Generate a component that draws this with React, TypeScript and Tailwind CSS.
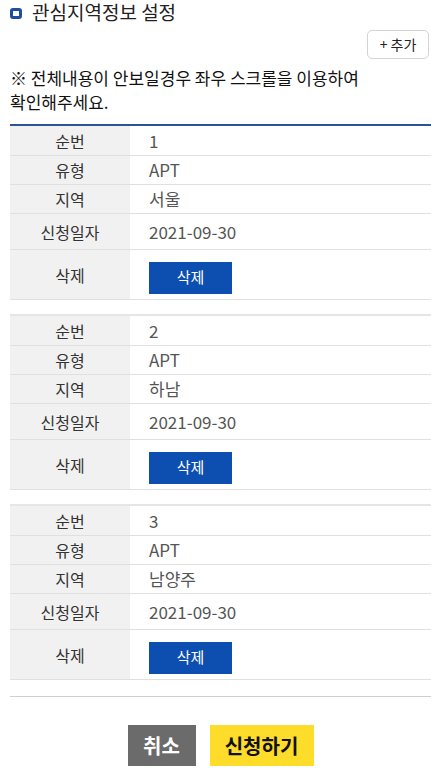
import React from "react";

interface AreaItem {
  no: number;
  type: string;
  region: string;
  date: string;
}

const items: AreaItem[] = [
  { no: 1, type: "APT", region: "서울", date: "2021-09-30" },
  { no: 2, type: "APT", region: "하남", date: "2021-09-30" },
  { no: 3, type: "APT", region: "남양주", date: "2021-09-30" },
];

function Row({ label, h, children }: { label: string; h: string; children: React.ReactNode }) {
  return (
    <div className={`flex border-b border-[#e0e0e0] ${h}`}>
      <div className="w-[120px] shrink-0 bg-[#f1f1f1] flex items-center justify-center text-[16px] text-[#333]">
        {label}
      </div>
      <div className="flex-1 flex items-center pl-[19px] text-[17px] text-[#555]">{children}</div>
    </div>
  );
}

function AreaTable({ item, first }: { item: AreaItem; first: boolean }) {
  return (
    <div className={first ? "border-t-2 border-[#2a5499]" : "border-t-2 border-[#e6e6e6] mt-[14px]"}>
      <Row label="순번" h="h-[30px]">{item.no}</Row>
      <Row label="유형" h="h-[29px]">{item.type}</Row>
      <Row label="지역" h="h-[29px]">{item.region}</Row>
      <Row label="신청일자" h="h-[36px]">{item.date}</Row>
      <Row label="삭제" h="h-[50px]">
        <button className="mt-[6px] w-[83px] h-[32px] bg-[#0c4fb0] text-white text-[15px]">삭제</button>
      </Row>
    </div>
  );
}

export default function App() {
  return (
    <div
      className="w-[441px] min-h-[781px] bg-white px-[10px]"
      style={{ fontFamily: '"Noto Sans CJK KR", "Noto Sans", sans-serif' }}
    >
      {/* title */}
      <div className="flex items-center h-[23px]">
        <span className="w-[12px] h-[11px] mt-[3px] rounded-[3px] border-[3px] border-[#1d4f9e] shrink-0" />
        <h2 className="ml-[10px] text-[19px] leading-[23px] text-[#222]">관심지역정보 설정</h2>
      </div>

      <div className="flex justify-end mt-[7px]">
        <button className="mr-[2px] w-[62px] h-[29px] rounded-[5px] border border-[#d4d4d4] bg-white text-[14px] text-[#222]">
          + 추가
        </button>
      </div>

      <p className="mt-[7px] text-[17px] leading-[24px] text-[#111]">
        ※ 전체내용이 안보일경우 좌우 스크롤을 이용하여
        <br />
        확인해주세요.
      </p>

      <div className="mt-[10px]">
        {items.map((item, i) => (
          <AreaTable key={item.no} item={item} first={i === 0} />
        ))}
      </div>

      <div className="mt-[16px] border-t border-[#cfcfcf]" />

      <div className="flex justify-center gap-[14px] mt-[28px]">
        <button className="w-[68px] h-[41px] bg-[#6b6b6b] text-white text-[20px] font-bold">취소</button>
        <button className="w-[104px] h-[41px] bg-[#fddc2a] text-[#111] text-[20px] font-bold">신청하기</button>
      </div>
    </div>
  );
}
